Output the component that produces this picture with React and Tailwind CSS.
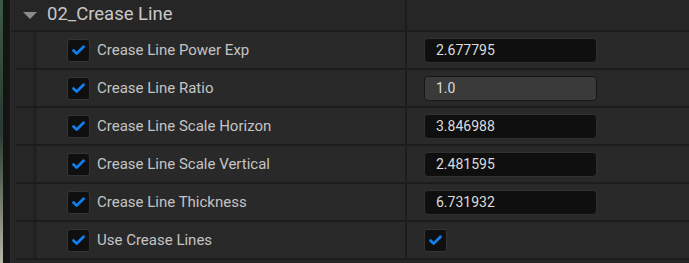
import { Check } from "lucide-react";

const rows = [
  { label: "Crease Line Power Exp", value: "2.677795" },
  { label: "Crease Line Ratio", value: "1.0", active: true },
  { label: "Crease Line Scale Horizon", value: "3.846988" },
  { label: "Crease Line Scale Vertical", value: "2.481595" },
  { label: "Crease Line Thickness", value: "6.731932" },
  { label: "Use Crease Lines", bool: true },
];

const CheckBox = () => (
  <div className="w-[23px] h-[23px] rounded-[3px] bg-[#0f0f0f] border border-[#343434] flex items-center justify-center">
    <Check size={15} strokeWidth={4.5} className="text-[#1080ee]" />
  </div>
);

const Row = ({ row }) => (
  <div className="flex h-[38px] border-b-2 border-[#1c1c1c] ml-[5px]">
    <div className="w-[17px] bg-[#262626]" />
    <div className="w-[4px] bg-[#212121]" />
    <div className="w-[368px] bg-[#292929] flex items-center pl-[30px] gap-[7px]">
      <CheckBox />
      <span className="text-[15px] text-[#c4c4c4]">{row.label}</span>
    </div>
    <div className="w-[2px] bg-[#1c1c1c]" />
    <div className="flex-1 bg-[#292929] flex items-center pl-[17px]">
      {row.bool ? (
        <CheckBox />
      ) : (
        <div
          className={
            row.active
              ? "w-[173px] h-[25px] rounded-[4px] bg-[#3a3a3a] border border-[#161616] flex items-center pl-[11px] text-[14px] text-[#dcdcdc]"
              : "w-[173px] h-[25px] rounded-[4px] bg-[#0f0f0f] border border-[#303030] flex items-center pl-[11px] text-[14px] text-[#dcdcdc]"
          }
        >
          {row.value}
        </div>
      )}
    </div>
  </div>
);

export default function App() {
  return (
    <div
      className="flex w-[689px] h-[263px] overflow-hidden bg-[#262626]"
      style={{ fontFamily: "Roboto, 'Noto Sans', sans-serif" }}
    >
      <div className="w-[3px] bg-gradient-to-b from-[#3c5a48] via-[#2a3a30] to-[#b8b8a8]" />
      <div className="w-[7px] bg-[#141414]" />
      <div className="w-[1px] bg-[#2c2c2c]" />
      <div className="flex-1 flex flex-col">
        <div className="flex h-[32px] border-b-2 border-[#1c1c1c]">
          <div className="w-[394px] flex items-center bg-[#262626]">
            <svg width="14" height="7" viewBox="0 0 14 7" className="ml-[12px] mr-[10px]">
              <polygon points="0,0 14,0 7,7" fill="#8c8c8c" />
            </svg>
            <span className="text-[18.5px] text-[#c8c8c8]">02_Crease Line</span>
          </div>
          <div className="w-[2px] bg-[#1c1c1c]" />
          <div className="flex-1 bg-[#262626]" />
        </div>
        {rows.map((r) => (
          <Row key={r.label} row={r} />
        ))}
      </div>
    </div>
  );
}
